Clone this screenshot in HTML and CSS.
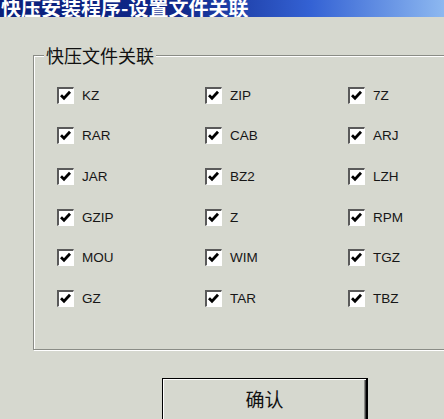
FILE: index.html
```html
<!DOCTYPE html>
<html lang="zh-CN">
<head>
<meta charset="utf-8">
<title>快压安装程序-设置文件关联</title>
<link rel="stylesheet" href="styles.css">
</head>
<body>
<div class="window">
  <div class="titlebar"><span class="title-text">快压安装程序-设置文件关联</span></div>
  <div class="content">
    <fieldset class="group">
      <legend class="group-label">快压文件关联</legend>
      <div class="grid">
        <label class="item"><span class="box"><svg viewBox="0 0 17 17" width="17" height="17"><path d="M4 8.2 L7 11.2 L13 4.8" fill="none" stroke="#000" stroke-width="2.8"/></svg></span><span class="name">KZ</span></label>
        <label class="item"><span class="box"><svg viewBox="0 0 17 17" width="17" height="17"><path d="M4 8.2 L7 11.2 L13 4.8" fill="none" stroke="#000" stroke-width="2.8"/></svg></span><span class="name">ZIP</span></label>
        <label class="item"><span class="box"><svg viewBox="0 0 17 17" width="17" height="17"><path d="M4 8.2 L7 11.2 L13 4.8" fill="none" stroke="#000" stroke-width="2.8"/></svg></span><span class="name">7Z</span></label>
        <label class="item"><span class="box"><svg viewBox="0 0 17 17" width="17" height="17"><path d="M4 8.2 L7 11.2 L13 4.8" fill="none" stroke="#000" stroke-width="2.8"/></svg></span><span class="name">RAR</span></label>
        <label class="item"><span class="box"><svg viewBox="0 0 17 17" width="17" height="17"><path d="M4 8.2 L7 11.2 L13 4.8" fill="none" stroke="#000" stroke-width="2.8"/></svg></span><span class="name">CAB</span></label>
        <label class="item"><span class="box"><svg viewBox="0 0 17 17" width="17" height="17"><path d="M4 8.2 L7 11.2 L13 4.8" fill="none" stroke="#000" stroke-width="2.8"/></svg></span><span class="name">ARJ</span></label>
        <label class="item"><span class="box"><svg viewBox="0 0 17 17" width="17" height="17"><path d="M4 8.2 L7 11.2 L13 4.8" fill="none" stroke="#000" stroke-width="2.8"/></svg></span><span class="name">JAR</span></label>
        <label class="item"><span class="box"><svg viewBox="0 0 17 17" width="17" height="17"><path d="M4 8.2 L7 11.2 L13 4.8" fill="none" stroke="#000" stroke-width="2.8"/></svg></span><span class="name">BZ2</span></label>
        <label class="item"><span class="box"><svg viewBox="0 0 17 17" width="17" height="17"><path d="M4 8.2 L7 11.2 L13 4.8" fill="none" stroke="#000" stroke-width="2.8"/></svg></span><span class="name">LZH</span></label>
        <label class="item"><span class="box"><svg viewBox="0 0 17 17" width="17" height="17"><path d="M4 8.2 L7 11.2 L13 4.8" fill="none" stroke="#000" stroke-width="2.8"/></svg></span><span class="name">GZIP</span></label>
        <label class="item"><span class="box"><svg viewBox="0 0 17 17" width="17" height="17"><path d="M4 8.2 L7 11.2 L13 4.8" fill="none" stroke="#000" stroke-width="2.8"/></svg></span><span class="name">Z</span></label>
        <label class="item"><span class="box"><svg viewBox="0 0 17 17" width="17" height="17"><path d="M4 8.2 L7 11.2 L13 4.8" fill="none" stroke="#000" stroke-width="2.8"/></svg></span><span class="name">RPM</span></label>
        <label class="item"><span class="box"><svg viewBox="0 0 17 17" width="17" height="17"><path d="M4 8.2 L7 11.2 L13 4.8" fill="none" stroke="#000" stroke-width="2.8"/></svg></span><span class="name">MOU</span></label>
        <label class="item"><span class="box"><svg viewBox="0 0 17 17" width="17" height="17"><path d="M4 8.2 L7 11.2 L13 4.8" fill="none" stroke="#000" stroke-width="2.8"/></svg></span><span class="name">WIM</span></label>
        <label class="item"><span class="box"><svg viewBox="0 0 17 17" width="17" height="17"><path d="M4 8.2 L7 11.2 L13 4.8" fill="none" stroke="#000" stroke-width="2.8"/></svg></span><span class="name">TGZ</span></label>
        <label class="item"><span class="box"><svg viewBox="0 0 17 17" width="17" height="17"><path d="M4 8.2 L7 11.2 L13 4.8" fill="none" stroke="#000" stroke-width="2.8"/></svg></span><span class="name">GZ</span></label>
        <label class="item"><span class="box"><svg viewBox="0 0 17 17" width="17" height="17"><path d="M4 8.2 L7 11.2 L13 4.8" fill="none" stroke="#000" stroke-width="2.8"/></svg></span><span class="name">TAR</span></label>
        <label class="item"><span class="box"><svg viewBox="0 0 17 17" width="17" height="17"><path d="M4 8.2 L7 11.2 L13 4.8" fill="none" stroke="#000" stroke-width="2.8"/></svg></span><span class="name">TBZ</span></label>
      </div>
    </fieldset>
    <div class="actions">
      <button class="ok" type="button">确认</button>
    </div>
  </div>
</div>
</body>
</html>
```
FILE: styles.css
```css
html, body {
  margin: 0;
  padding: 0;
  background: #d6d8cf;
  overflow: hidden;
}
.window {
  width: 444px;
  height: 419px;
  overflow: hidden;
  background: #d6d8cf;
  font-family: "Liberation Sans", "Noto Sans CJK SC", sans-serif;
}
.titlebar {
  height: 17px;
  overflow: hidden;
  background: linear-gradient(to right, #0a1f7a 0%, #10288a 40%, #3462d4 70%, #8db8f0 100%);
  display: flex;
  align-items: flex-end;
}
.title-text {
  display: block;
  font-family: "Noto Sans CJK SC", sans-serif;
  font-weight: 700;
  font-size: 20px;
  line-height: 20px;
  color: #fff;
  padding-left: 1px;
  margin-bottom: -1px;
  white-space: nowrap;
}
.content {
  padding-top: 28px;
  width: 480px;
}
.group {
  margin: 0 0 0 33px;
  padding: 10px 0 30px 23px;
  width: 420px;
  border: 1px solid #8a8c86;
  box-shadow: 1px 1px 0 #fff, inset 1px 1px 0 #fff;
  min-inline-size: 0;
}
.group-label {
  font-family: "Noto Sans CJK SC", sans-serif;
  font-size: 18px;
  line-height: 20px;
  color: #111;
  padding: 0 2px;
  margin-left: -13px;
  background: #d6d8cf;
}
.grid {
  display: grid;
  grid-template-columns: 148px 143px 1fr;
  grid-auto-rows: 40.6px;
  align-items: center;
}
.item {
  display: flex;
  align-items: center;
  gap: 8px;
}
.box {
  display: block;
  width: 17px;
  height: 17px;
  box-sizing: border-box;
  background: #fff;
  border-top: 2px solid #5a5a5a;
  border-left: 2px solid #5a5a5a;
  border-right: 1px solid #fff;
  border-bottom: 1px solid #fff;
  position: relative;
  overflow: hidden;
}
.box svg {
  position: absolute;
  left: -2px;
  top: -2px;
}
.name {
  font-size: 13.5px;
  color: #161616;
  line-height: 17px;
}
.actions {
  padding-top: 28px;
  padding-left: 162px;
}
.ok {
  display: block;
  width: 206px;
  height: 46px;
  margin: 0;
  padding: 0 0 6px 0;
  background: #d6d8cf;
  border: 1px solid #000;
  border-right-width: 2px;
  box-shadow: inset 1px 1px 0 #fff, inset -1px -1px 0 #404040, inset -2px -2px 0 #8a8c86;
  font-family: "Noto Sans CJK SC", sans-serif;
  font-size: 19px;
  color: #111;
  line-height: 40px;
}
```
